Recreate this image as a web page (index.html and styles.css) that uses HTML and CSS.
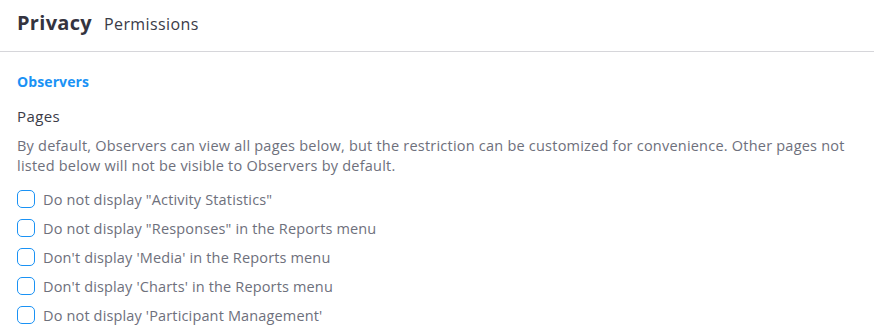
FILE: index.html
```html
<!DOCTYPE html>
<html lang="en">
<head>
    <meta charset="UTF-8">
    <meta name="viewport" content="width=device-width, initial-scale=1.0">
    <title>Privacy Permissions</title>
    <link rel="stylesheet" href="styles.css">
</head>
<body>
    <div class="page-header">
        <h1 class="page-title">Privacy</h1>
        <span class="page-subtitle">Permissions</span>
    </div>

    <div class="content">
        <h2 class="group-title">Observers</h2>

        <!-- pages -->
        <div class="section">
            <h3 class="section-title">Pages</h3>
            <p class="section-desc">By default, Observers can view all pages below, but the restriction can be customized for convenience. Other pages not listed below will not be visible to Observers by default.</p>

            <div class="check-list">
                <label class="check-row"><input type="checkbox"><span>Do not display "Activity Statistics"</span></label>
                <label class="check-row"><input type="checkbox"><span>Do not display "Responses" in the Reports menu</span></label>
                <label class="check-row"><input type="checkbox"><span>Don't display 'Media' in the Reports menu</span></label>
                <label class="check-row"><input type="checkbox"><span>Don't display 'Charts' in the Reports menu</span></label>
                <label class="check-row"><input type="checkbox"><span>Do not display 'Participant Management'</span></label>
            </div>
        </div>
    </div>
</body>
</html>
```

FILE: styles.css
```css
* {
    box-sizing: border-box;
    margin: 0;
    padding: 0;
}

body {
    font-family: "Open Sans", "Noto Sans", sans-serif;
    background-color: #fff;
    color: #3d3f4d;
}

.page-header {
    display: flex;
    align-items: baseline;
    gap: 12px;
    height: 52px;
    padding: 9px 17px 0;
    border-bottom: 1px solid #d6d6da;
}

.page-title {
    font-size: 20px;
    font-weight: 700;
    letter-spacing: 0.3px;
    color: #34343f;
}

.page-subtitle {
    font-size: 16px;
    letter-spacing: 0.4px;
    color: #3a3b47;
}

.content {
    padding: 20px 17px 0;
}

.group-title {
    font-size: 14px;
    font-weight: 700;
    letter-spacing: 0.1px;
    color: #1a92f5;
    margin-bottom: 15px;
}

.section-title {
    font-size: 15px;
    font-weight: 500;
    letter-spacing: 0.4px;
    color: #3a3b47;
    margin-bottom: 10px;
}

.section-desc {
    font-size: 14.5px;
    line-height: 20px;
    letter-spacing: 0.22px;
    color: #6e707c;
    margin-bottom: 13px;
}

.check-list {
    display: flex;
    flex-direction: column;
    gap: 9px;
}

.check-row {
    display: flex;
    align-items: center;
    gap: 8px;
    height: 20px;
    font-size: 14.5px;
    letter-spacing: 0.15px;
    color: #6e707c;
}

.check-row input {
    appearance: none;
    flex: none;
    width: 18px;
    height: 18px;
    border: 1px solid #1a92f5;
    border-radius: 5px;
    background: #fff;
}
```
